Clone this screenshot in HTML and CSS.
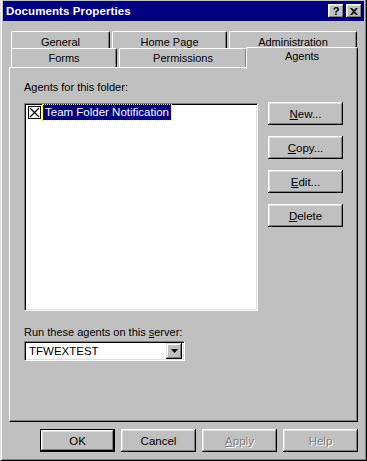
FILE: index.html
```html
<!DOCTYPE html>
<html>
<head>
<meta charset="utf-8">
<link rel="stylesheet" href="styles.css">
</head>
<body>
<div class="window">
  <div class="titlebar">
    <span class="title">Documents Properties</span>
    <div class="tbtns">
      <span class="tbtn q">?</span>
      <span class="tbtn x"><svg width="8" height="7" viewBox="0 0 8 7"><path d="M0 0h2l2 2 2-2h2L5 3.5 8 7H6L4 5 2 7H0l3-3.5z" fill="#000"/></svg></span>
    </div>
  </div>
  <div class="content">
    <div class="tabs">
      <div class="tabrow row1">
        <div class="tab w-general">General</div>
        <div class="tab w-home">Home Page</div>
        <div class="tab w-admin">Administration</div>
      </div>
      <div class="tabrow row2">
        <div class="tab w-forms">Forms</div>
        <div class="tab w-perm">Permissions</div>
        <div class="tab sel w-agents">Agents</div>
      </div>
    </div>
    <div class="panel">
      <div class="label">Agents for this folder:</div>
      <div class="mid">
        <div class="list">
          <div class="item">
            <span class="chk"><svg width="11" height="11" viewBox="0 0 11 11"><path d="M1 1L10 10M10 1L1 10" stroke="#000" stroke-width="1.2"/></svg></span>
            <span class="itemtext">Team Folder Notification</span>
          </div>
        </div>
        <div class="side">
          <div class="btn"><u>N</u>ew...</div>
          <div class="btn"><u>C</u>opy...</div>
          <div class="btn"><u>E</u>dit...</div>
          <div class="btn"><u>D</u>elete</div>
        </div>
      </div>
      <div class="label2">Run these agents on this <u>s</u>erver:</div>
      <div class="combo">
        <span class="combotext">TFWEXTEST</span>
        <span class="drop"><svg width="7" height="4" viewBox="0 0 7 4"><path d="M0 0h7L3.5 4z" fill="#000"/></svg></span>
      </div>
    </div>
    <div class="footer">
      <div class="btn def">OK</div>
      <div class="btn">Cancel</div>
      <div class="btn dis"><u>A</u>pply</div>
      <div class="btn dis">Help</div>
    </div>
  </div>
</div>
</body>
</html>
```
FILE: styles.css
```css
* { box-sizing: border-box; }
html, body { margin: 0; padding: 0; background: #c0c0c0; }
body {
  font-family: "Liberation Sans", Arial, sans-serif;
  font-size: 11px;
  color: #000;
}
.window {
  width: 367px;
  height: 461px;
  background: #c0c0c0;
  border-left: 1px solid #dfdfdf;
  border-right: 1px solid #000;
  border-bottom: 1px solid #000;
  box-shadow: inset 1px 0 #fff, inset -1px -1px #808080;
  padding: 1px 2px 2px 2px;
}
.titlebar {
  height: 20px;
  background: #000080;
  display: flex;
  align-items: center;
  justify-content: space-between;
  padding: 0 2px 0 3px;
}
.title {
  color: #fff;
  font-weight: bold;
  font-size: 11.5px;
  letter-spacing: 0.1px;
}
.tbtns { display: flex; gap: 2px; }
.tbtn {
  width: 16px;
  height: 14px;
  background: #c0c0c0;
  box-shadow: inset -1px -1px #000, inset 1px 1px #fff, inset -2px -2px #808080, inset 2px 2px #dfdfdf;
  display: flex;
  align-items: center;
  justify-content: center;
  font-weight: bold;
  font-size: 11px;
  line-height: 1;
}
.content {
  padding: 10px 4px 0 6px;
}
.tabs { padding-left: 2px; }
.tabrow { display: flex; }
.row1 { height: 17px; }
.row2 { height: 19px; align-items: flex-end; }
.tab {
  background: #c0c0c0;
  border-top: 1px solid #fff;
  border-left: 1px solid #fff;
  border-right: 1px solid #000;
  border-radius: 2px 2px 0 0;
  box-shadow: inset -1px 0 #808080;
  text-align: center;
  line-height: 16px;
  height: 100%;
}
.row1 .tab { padding-top: 2px; }
.row2 .tab { height: 19px; padding-top: 1px; }
.w-general { width: 99px; }
.w-home { width: 115px; margin-left: 2px; }
.w-admin { width: 128px; margin-left: 2px; }
.w-forms { width: 106px; }
.w-perm { width: 128px; margin-left: 2px; }
.w-agents { width: 112px; margin-left: -1px; }
.tab.sel {
  height: 22px;
  margin-bottom: -2px;
  padding-top: 0;
  position: relative;
  z-index: 1;
}
.panel {
  width: 349px;
  height: 355px;
  border-top: 1px solid #fff;
  border-left: 1px solid #fff;
  border-right: 1px solid #000;
  border-bottom: 1px solid #000;
  box-shadow: inset -1px -1px #808080;
  margin-left: 0;
  padding: 13px 0 0 14px;
}
.label { line-height: 13px; height: 13px; }
.mid { display: flex; margin-top: 9px; }
.list {
  width: 234px;
  height: 208px;
  background: #fff;
  border-top: 1px solid #808080;
  border-left: 1px solid #808080;
  border-right: 1px solid #fff;
  border-bottom: 1px solid #fff;
  box-shadow: inset 1px 1px #000, inset -1px -1px #dfdfdf;
  padding: 1px 2px;
}
.item { display: flex; align-items: center; height: 15px; }
.chk {
  width: 13px;
  height: 13px;
  border: 1px solid #000;
  background: #fff;
  display: flex;
  align-items: center;
  justify-content: center;
  margin-left: 1px;
}
.itemtext {
  margin-left: 2px;
  background: #000080;
  color: #fff;
  padding: 0 1px;
  line-height: 13px;
  font-size: 11.5px;
  outline: 1px dotted #ffff00;
  outline-offset: 0;
  border: 1px solid #000080;
}
.side {
  display: flex;
  flex-direction: column;
  gap: 11px;
  margin-left: 10px;
  margin-top: -1px;
}
.btn {
  width: 75px;
  height: 23px;
  background: #c0c0c0;
  box-shadow: inset -1px -1px #000, inset 1px 1px #fff, inset -2px -2px #808080, inset 2px 2px #dfdfdf;
  display: flex;
  align-items: center;
  justify-content: center;
  font-size: 11.5px;
}
.label2 { margin-top: 15px; line-height: 13px; height: 13px; }
.combo {
  margin-top: 2px;
  width: 161px;
  height: 20px;
  background: #fff;
  border-top: 1px solid #808080;
  border-left: 1px solid #808080;
  border-right: 1px solid #fff;
  border-bottom: 1px solid #fff;
  box-shadow: inset 1px 1px #000, inset -1px -1px #dfdfdf;
  display: flex;
  align-items: center;
  justify-content: space-between;
  padding: 2px;
}
.combotext { padding-left: 2px; font-size: 11.5px; }
.drop {
  width: 16px;
  height: 16px;
  background: #c0c0c0;
  box-shadow: inset -1px -1px #000, inset 1px 1px #dfdfdf, inset -2px -2px #808080, inset 2px 2px #fff;
  display: flex;
  align-items: center;
  justify-content: center;
}
.footer {
  display: flex;
  justify-content: flex-end;
  gap: 6px;
  margin-top: 7px;
  width: 349px;
}
.btn.def {
  border: 1px solid #000;
}
.btn.dis {
  color: #808080;
  text-shadow: 1px 1px #fff;
}
```
